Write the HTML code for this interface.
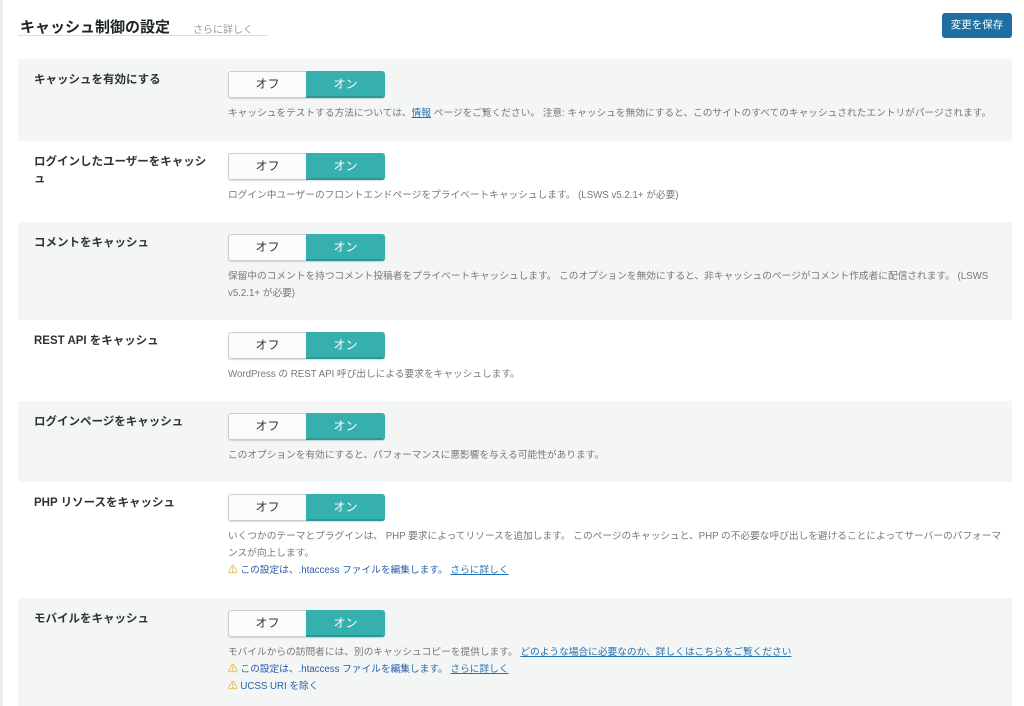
<!DOCTYPE html>
<html><head><meta charset="utf-8"><style>
*{margin:0;padding:0;box-sizing:border-box}
body{width:1024px;height:706px;overflow:hidden;background:#fff;font-family:"Liberation Sans","Noto Sans CJK JP",sans-serif;position:relative}
.strip{position:absolute;left:0;top:0;width:3px;height:706px;background:#ececec}
.title{position:absolute;left:20px;top:16px;font-size:15px;font-weight:bold;color:#1d2327}
.more{position:absolute;left:193px;top:21px;font-size:10px;color:#999}
.uline{position:absolute;left:18px;top:35px;width:249px;height:1px;background:#ddd}
.btn{position:absolute;left:942px;top:13px;width:70px;height:25px;background:#1e6fa0;border-radius:3px;color:#fff;font-size:10.5px;text-align:center;line-height:25px}
.row{position:absolute;left:18px;width:994px}
.g{background:#f4f5f5}
.lbl{position:absolute;left:16px;top:13px;font-size:11.5px;font-weight:bold;color:#2c3338;width:180px;line-height:17px}
.tg{position:absolute;left:210px;top:12px;width:157px;height:27px;display:flex;border-radius:3px;overflow:hidden;box-shadow:0 1px 1px rgba(0,0,0,.15)}
.off{width:78px;background:#fbfbfb;border:1px solid #ccc;border-right:none;border-radius:3px 0 0 3px;font-size:12px;color:#333;text-align:center;line-height:25px}
.on{flex:1;background:#36b0ae;color:#fff;font-size:12px;text-align:center;line-height:27px;border-bottom:2px solid #2a9a98}
.d{position:absolute;left:210px;top:46px;width:770px;font-size:9.7px;color:#777;line-height:17px}
.n{white-space:nowrap;width:auto}
.d a{color:#2271b1;text-decoration:underline}
.w{color:#2a5ea8}
.w i{font-style:normal;color:#e0a000}
</style></head><body>
<div class="strip"></div>
<div class="title">キャッシュ制御の設定</div>
<div class="more">さらに詳しく</div>
<div class="uline"></div>
<div class="btn">変更を保存</div>

<div class="row g" style="top:59px;height:82px"><div class="lbl">キャッシュを有効にする</div><div class="tg"><div class="off">オフ</div><div class="on">オン</div></div><div class="d n">キャッシュをテストする方法については、<a>情報</a> ページをご覧ください。 注意: キャッシュを無効にすると、このサイトのすべてのキャッシュされたエントリがパージされます。</div></div>

<div class="row" style="top:141px;height:81px"><div class="lbl">ログインしたユーザーをキャッシュ</div><div class="tg"><div class="off">オフ</div><div class="on">オン</div></div><div class="d">ログイン中ユーザーのフロントエンドページをプライベートキャッシュします。 (LSWS v5.2.1+ が必要)</div></div>

<div class="row g" style="top:222px;height:98px"><div class="lbl">コメントをキャッシュ</div><div class="tg"><div class="off">オフ</div><div class="on">オン</div></div><div class="d">保留中のコメントを持つコメント投稿者をプライベートキャッシュします。 このオプションを無効にすると、非キャッシュのページがコメント作成者に配信されます。 (LSWS v5.2.1+ が必要)</div></div>

<div class="row" style="top:320px;height:81px"><div class="lbl">REST API をキャッシュ</div><div class="tg"><div class="off">オフ</div><div class="on">オン</div></div><div class="d">WordPress の REST API 呼び出しによる要求をキャッシュします。</div></div>

<div class="row g" style="top:401px;height:81px"><div class="lbl">ログインページをキャッシュ</div><div class="tg"><div class="off">オフ</div><div class="on">オン</div></div><div class="d">このオプションを有効にすると、パフォーマンスに悪影響を与える可能性があります。</div></div>

<div class="row" style="top:482px;height:116px"><div class="lbl">PHP リソースをキャッシュ</div><div class="tg"><div class="off">オフ</div><div class="on">オン</div></div><div class="d n">いくつかのテーマとプラグインは、 PHP 要求によってリソースを追加します。 このページのキャッシュと、PHP の不必要な呼び出しを避けることによってサーバーのパフォーマ<br>ンスが向上します。<br><span class="w"><i>⚠</i> この設定は、.htaccess ファイルを編集します。 <a>さらに詳しく</a></span></div></div>

<div class="row g" style="top:598px;height:108px"><div class="lbl">モバイルをキャッシュ</div><div class="tg"><div class="off">オフ</div><div class="on">オン</div></div><div class="d">モバイルからの訪問者には、別のキャッシュコピーを提供します。 <a>どのような場合に必要なのか、詳しくはこちらをご覧ください</a><br><span class="w"><i>⚠</i> この設定は、.htaccess ファイルを編集します。 <a>さらに詳しく</a></span><br><span class="w"><i>⚠</i> UCSS URI を除く</span></div></div>
</body></html>
